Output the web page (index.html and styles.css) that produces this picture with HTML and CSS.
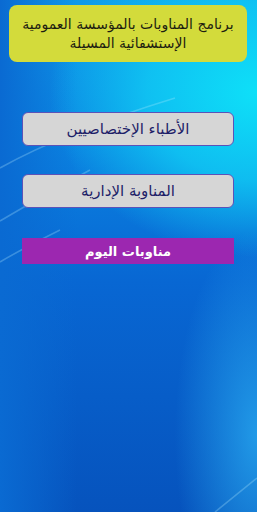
FILE: index.html
```html
<!DOCTYPE html>
<html lang="ar" dir="rtl">
<head>
  <meta charset="UTF-8" />
  <meta name="viewport" content="width=device-width, initial-scale=1.0" />
  <title>برنامج المناوبات</title>
  <link rel="stylesheet" href="styles.css">
</head>
<body>
  <div class="screen">
    <div class="title">برنامج المناوبات بالمؤسسة العمومية الإستشفائية المسيلة</div>

    <div class="menu">
      <button class="btn">الأطباء الإختصاصيين</button>
      <button class="btn">المناوبة الإدارية</button>
      <button class="btn today">مناوبات اليوم</button>
    </div>
  </div>
</body>
</html>
```

FILE: styles.css
```css
html, body {
  margin: 0;
  height: 100%;
}
body {
  font-family: "DejaVu Sans", "Noto Sans", sans-serif;
  background:
    url("data:image/svg+xml,%3Csvg xmlns='http://www.w3.org/2000/svg' width='257' height='512'%3E%3Cg fill='none' stroke='%23b8ecff' stroke-opacity='0.28' stroke-width='1.6'%3E%3Cpath d='M0 168 C50 140 110 118 175 98'/%3E%3Cpath d='M0 221 C30 203 60 186 90 170'/%3E%3Cpath d='M0 262 C20 250 40 240 60 230'/%3E%3Cpath d='M215 512 L257 478'/%3E%3C/g%3E%3C/svg%3E") no-repeat,
    radial-gradient(ellipse 95% 38% at 100% 18%, #0ee0f8 0%, rgba(16,205,245,0.8) 45%, rgba(16,170,240,0) 85%),
    radial-gradient(ellipse 40% 50% at 100% 85%, rgba(40,170,240,0.8) 0%, rgba(40,150,235,0) 80%),
    linear-gradient(90deg, #0a6ad2 0%, rgba(10,106,210,0) 30%),
    linear-gradient(180deg, #0f9ae8 0%, #0b86e2 25%, #0867d3 55%, #0653bd 100%);
  overflow: hidden;
}
.screen {
  padding: 5px 10px 0 9px;
}
.title {
  background: #d3db3b;
  border-radius: 8px;
  height: 57px;
  display: flex;
  align-items: center;
  justify-content: center;
  text-align: center;
  color: #1d1d10;
  font-size: 14px;
  line-height: 19px;
  padding: 0 8px;
}
.menu {
  display: flex;
  flex-direction: column;
  gap: 28px;
  margin: 50px 13px 0 13px;
}
.btn {
  font-family: inherit;
  height: 34px;
  background: #d6d6d6;
  color: #1e1e68;
  border: 1px solid #5b52b8;
  border-radius: 6px;
  font-size: 15px;
  padding: 0;
  cursor: pointer;
}
.btn.today {
  height: 26px;
  margin-top: 2px;
  background: #9c27b0;
  color: #ffffff;
  border: none;
  border-radius: 0;
  font-weight: bold;
  font-size: 13px;
}
```
